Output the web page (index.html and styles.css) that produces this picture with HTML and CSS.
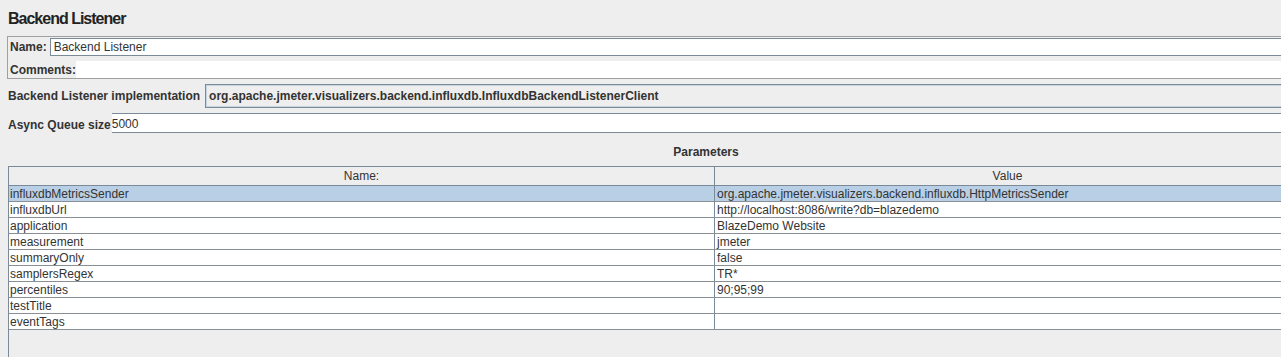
FILE: index.html
```html
<!DOCTYPE html>
<html>
<head>
<meta charset="utf-8">
<link rel="stylesheet" href="styles.css">
</head>
<body>
<div class="page">
  <h1 class="title">Backend Listener</h1>
  <div class="name-box">
    <div class="name-row">
      <span class="lbl">Name:</span>
      <div class="name-input">Backend Listener</div>
    </div>
    <div class="comments-row">
      <span class="lbl">Comments:</span>
      <div class="comments-input"></div>
    </div>
  </div>
  <div class="impl-row">
    <span class="lbl">Backend Listener implementation</span>
    <div class="combo">org.apache.jmeter.visualizers.backend.influxdb.InfluxdbBackendListenerClient</div>
  </div>
  <div class="async-row">
    <span class="lbl async-lbl">Async Queue size</span>
    <div class="async-input">5000</div>
  </div>
  <div class="params-title">Parameters</div>
  <div class="scroll">
    <div class="thead">
      <div class="c1 hc">Name:</div>
      <div class="c2 hc">Value</div>
    </div>
    <div class="tr sel"><div class="c1">influxdbMetricsSender</div><div class="c2">org.apache.jmeter.visualizers.backend.influxdb.HttpMetricsSender</div></div>
    <div class="tr"><div class="c1">influxdbUrl</div><div class="c2">http://localhost:8086/write?db=blazedemo</div></div>
    <div class="tr"><div class="c1">application</div><div class="c2">BlazeDemo Website</div></div>
    <div class="tr"><div class="c1">measurement</div><div class="c2">jmeter</div></div>
    <div class="tr"><div class="c1">summaryOnly</div><div class="c2">false</div></div>
    <div class="tr"><div class="c1">samplersRegex</div><div class="c2">TR*</div></div>
    <div class="tr"><div class="c1">percentiles</div><div class="c2">90;95;99</div></div>
    <div class="tr"><div class="c1">testTitle</div><div class="c2"></div></div>
    <div class="tr"><div class="c1">eventTags</div><div class="c2"></div></div>
  </div>
</div>
</body>
</html>
```
FILE: styles.css
```css
html, body {
  margin: 0;
  padding: 0;
  background: #eeeeee;
  overflow: hidden;
  height: 357px;
}
body {
  font-family: "Liberation Sans", Arial, sans-serif;
  color: #333333;
}
.page {
  width: 1300px;
}
.title {
  margin: 0;
  padding: 9px 0 0 8px;
  box-sizing: border-box;
  height: 36px;
  font-size: 16px;
  letter-spacing: -1px;
  font-weight: bold;
  line-height: 19px;
  color: #222222;
}
.lbl {
  font-weight: bold;
  font-size: 12px;
  color: #333333;
  white-space: nowrap;
}
.name-box {
  margin-left: 7px;
  border: 1px solid #a0a0a0;
  padding: 1px 0 0 2px;
  display: flex;
  flex-direction: column;
  gap: 5px;
}
.name-row, .comments-row {
  display: flex;
  align-items: center;
  gap: 3px;
}
.name-input {
  flex: 1;
  height: 18px;
  box-sizing: border-box;
  background: #ffffff;
  border: 1px solid #7a8a99;
  font-size: 12px;
  line-height: 16px;
  padding-left: 3px;
}
.comments-input {
  flex: 1;
  height: 17px;
  background: #ffffff;
  margin-left: -3px;
}
.impl-row {
  display: flex;
  align-items: center;
  gap: 5px;
  padding: 5px 0 0 8px;
}
.combo {
  flex: 1;
  height: 24px;
  box-sizing: border-box;
  border: 1px solid #7a8a99;
  box-shadow: inset 0 0 0 1px #c6d4e2;
  background: #eeeeee;
  font-weight: bold;
  font-size: 12px;
  line-height: 23px;
  padding-left: 3px;
  white-space: nowrap;
}
.async-row {
  display: flex;
  align-items: center;
  padding: 5px 0 0 8px;
}
.async-lbl {
  padding-top: 3px;
}
.async-input {
  flex: 1;
  height: 20px;
  box-sizing: border-box;
  border: 1px solid #7a8a99;
  border-left: none;
  background: #ffffff;
  font-size: 12px;
  line-height: 21px;
  margin-left: 1px;
}
.params-title {
  width: 1412px;
  text-align: center;
  font-weight: bold;
  font-size: 12px;
  padding-top: 12px;
  height: 21px;
  line-height: 14px;
}
.scroll {
  margin-left: 8px;
  border-left: 1px solid #7a8a99;
  border-top: 1px solid #7a8a99;
  height: 200px;
}
.thead, .tr {
  display: flex;
  font-size: 12px;
  color: #333333;
}
.thead {
  height: 19px;
  border-bottom: 1px solid #7a8a99;
  box-sizing: border-box;
}
.hc {
  text-align: center;
  line-height: 19px;
}
.c1 {
  width: 706px;
  flex: none;
  box-sizing: border-box;
  border-right: 1px solid #7a8a99;
  padding-left: 1px;
  white-space: nowrap;
}
.c2 {
  flex: 1;
  padding-left: 2px;
  white-space: nowrap;
}
.thead .c1 { padding-left: 0; }
.thead .c2 { padding-left: 0; }
.tr {
  height: 16px;
  box-sizing: border-box;
  border-bottom: 1px solid #8a8f96;
  background: #ffffff;
  line-height: 16px;
}
.tr.sel {
  background: #b8cfe5;
}
```
